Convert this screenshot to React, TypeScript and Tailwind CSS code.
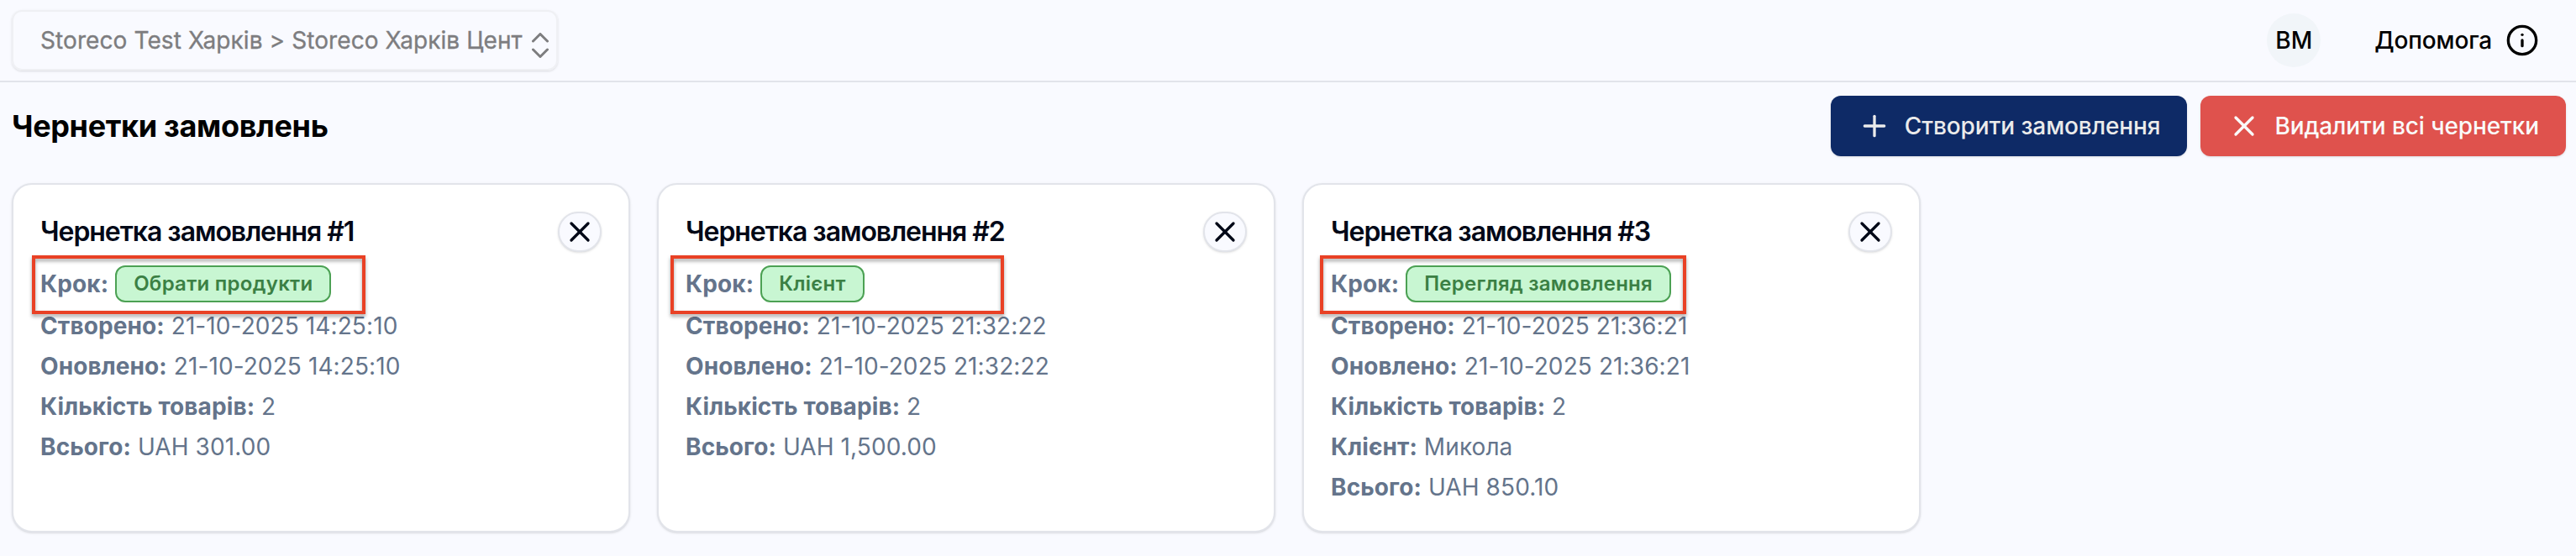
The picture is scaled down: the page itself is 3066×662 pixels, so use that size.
import { Info, Plus, X } from "lucide-react";
import { clsx } from "clsx";

type Draft = {
  id: number;
  step: string;
  rows: [string, string][];
  mark: string;
};

const drafts: Draft[] = [
  {
    id: 1,
    step: "Обрати продукти",
    rows: [
      ["Створено", "21-10-2025 14:25:10"],
      ["Оновлено", "21-10-2025 14:25:10"],
      ["Кількість товарів", "2"],
      ["Всього", "UAH 301.00"]
    ],
    mark: "left-[22px] w-[397px]"
  },
  {
    id: 2,
    step: "Клієнт",
    rows: [
      ["Створено", "21-10-2025 21:32:22"],
      ["Оновлено", "21-10-2025 21:32:22"],
      ["Кількість товарів", "2"],
      ["Всього", "UAH 1,500.00"]
    ],
    mark: "left-[14px] w-[397px]"
  },
  {
    id: 3,
    step: "Перегляд замовлення",
    rows: [
      ["Створено", "21-10-2025 21:36:21"],
      ["Оновлено", "21-10-2025 21:36:21"],
      ["Кількість товарів", "2"],
      ["Клієнт", "Микола"],
      ["Всього", "UAH 850.10"]
    ],
    mark: "left-[19px] w-[436px]"
  }
];

function TopBar() {
  return (
    <header className="flex h-[98px] items-center justify-between border-b-2 border-[#e2e4ea] pl-3.5 pr-11">
      <button className="flex h-[72px] w-[650px] items-center justify-between rounded-xl border-2 border-[#eff0f4] pl-8 pr-[9px] text-[28px] text-[#7d7d7f] shadow-sm">
        <span className="whitespace-nowrap tracking-[0.09px] [-webkit-text-stroke:0.35px_#7d7d7f]">
          Storeco Test Харків &gt; Storeco Харків Цент
        </span>
        <svg
          viewBox="0 0 20 30"
          className="mt-3 h-[30px] w-5 shrink-0"
          fill="none"
          stroke="currentColor"
          strokeWidth="3"
          strokeLinecap="round"
          strokeLinejoin="round"
        >
          <path d="M1.5 10 10 1.5l8.500 8.500M1.500 20l8.500 8.500 8.500-8.500" />
        </svg>
      </button>
      <div className="flex items-center text-[28px] font-medium text-black">
        <span className="mr-16 flex size-16 items-center justify-center rounded-full bg-[#f1f5f9]">ВМ</span>
        <span className="mr-4 tracking-[-0.15px]">Допомога</span>
        <Info size={40} />
      </div>
    </header>
  );
}

function DraftCard({ draft }: { draft: Draft }) {
  return (
    <article className="relative h-[416px] rounded-3xl border-2 border-[#e2e4ea] bg-white px-8 pt-8 shadow">
      <div className="flex h-12 items-center justify-between">
        <h2 className="text-[32px] font-semibold tracking-[-1.05px] text-[#020817]">Чернетка замовлення #{draft.id}</h2>
        <button
          aria-label="Видалити"
          className="flex h-12 w-[52px] items-center justify-center rounded-full border-2 border-[#e2e4ea] bg-[#f9faff] text-[#020817] shadow-sm"
        >
          <X size={40} className="shrink-0" />
        </button>
      </div>
      <div className="text-[28px] leading-10 tracking-[0.1px] text-[#64748b]">
        <div className="mb-2 mt-4 flex h-11 items-center gap-2">
          <b>Крок:</b>
          <span className="flex h-11 items-center rounded-xl border-2 border-[#4ca154] bg-[#c8f6d2] px-5 text-2xl font-semibold tracking-[0.27px] text-[#3b8044]">
            {draft.step}
          </span>
        </div>
        <div className="grid gap-2">
          {draft.rows.map(([label, value]) => (
            <p key={label}>
              <b>{label}:</b> {value}
            </p>
          ))}
        </div>
      </div>
      <div
        className={clsx(
          "absolute top-[84px] h-[70px] border-4 border-[#e94125] drop-shadow-[0_3px_2px_rgba(0,0,0,0.35)]",
          draft.mark
        )}
      />
    </article>
  );
}

export default function App() {
  return (
    <div className="h-[662px] overflow-hidden bg-[#f9faff] font-[Inter,sans-serif]">
      <TopBar />
      <main className="pl-3.5 pr-3 pt-4">
        <div className="mb-8 flex items-center justify-between">
          <h1 className="text-[36px] font-bold tracking-[-0.33px] text-black">Чернетки замовлень</h1>
          <div className="flex gap-4 text-[28px] font-medium tracking-[-0.1px]">
            <button className="flex h-[72px] items-center gap-4 rounded-xl bg-[#0e2a66] px-8 text-[#ebebeb] shadow">
              <Plus size={40} /> Створити замовлення
            </button>
            <button className="flex h-[72px] items-center gap-4 rounded-xl bg-[#df524d] px-8 text-[#fafafa] shadow-sm">
              <X size={40} /> Видалити всі чернетки
            </button>
          </div>
        </div>
        <section className="grid grid-cols-4 gap-8">
          {drafts.map((draft) => (
            <DraftCard key={draft.id} draft={draft} />
          ))}
        </section>
      </main>
    </div>
  );
}
